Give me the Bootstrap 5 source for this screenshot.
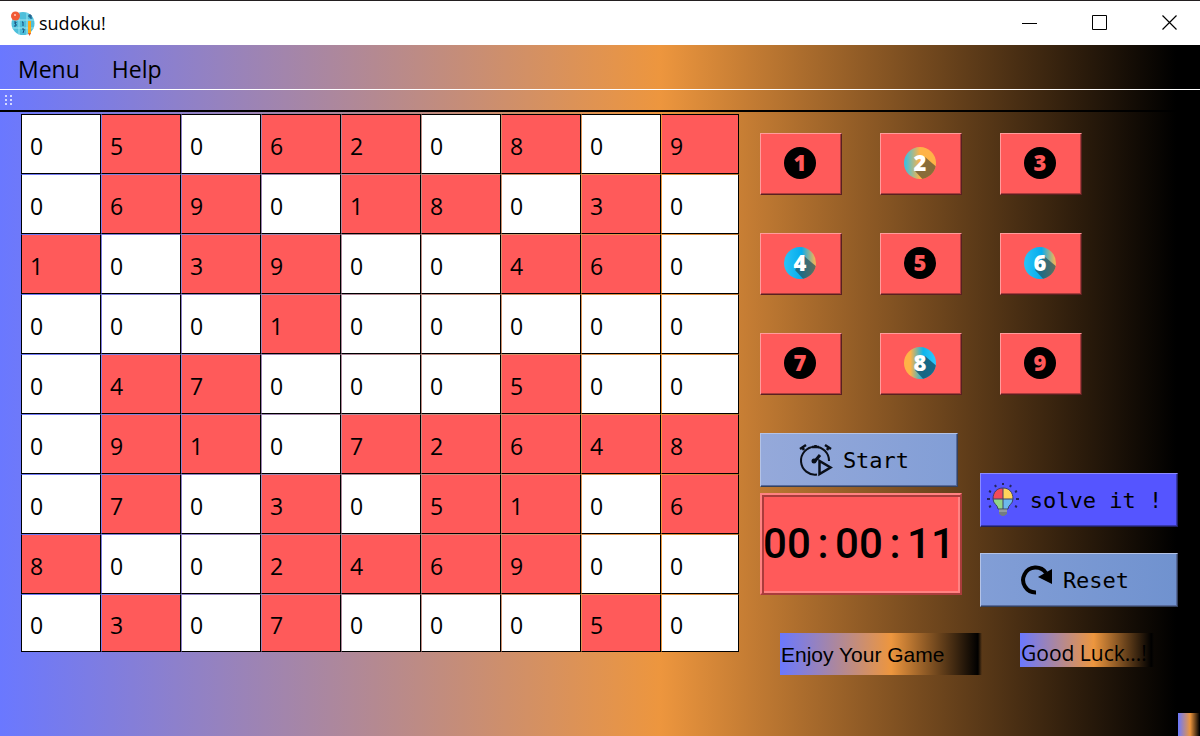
<!DOCTYPE html>
<html lang="en">
<head>
<meta charset="utf-8">
<meta name="viewport" content="width=device-width, initial-scale=1">
<title>sudoku!</title>
<link href="https://cdn.jsdelivr.net/npm/bootstrap@5.3.0/dist/css/bootstrap.min.css" rel="stylesheet">
<style>
:root{--glow:linear-gradient(90deg,#6a78ff 0%,#ed963e 55%,#000 98%,transparent 100%);--key:#ff5a5a}
body{font-family:"Open Sans","Noto Sans",sans-serif;color:#000;background:#000}
.app-window{background:var(--glow)}
.title-bar{height:45px;background:#fff;border-top:1px solid #231f20;font-size:18px;padding-left:10px}
.title-bar button{width:70px;height:44px;padding:0 0 4px 10px}
.menu-row{height:45px;border-bottom:1px solid #fff;padding:4px 0 0 18px;gap:32px;font-size:23px}
.menu-row a{color:#000;text-decoration:none}
.tool-row{height:22px;border-bottom:2px solid #000;padding-left:5px}
.play-area{display:grid;grid-template-columns:minmax(0,1fr) 440px;column-gap:21px;padding-left:21px;align-items:start}
.board{table-layout:fixed;border-collapse:separate;border-spacing:0;width:100%;margin-top:2px;font-size:23px;line-height:30px}
.board td{height:60px;padding:4px 8px 0;background:#fff;background-clip:padding-box;border:1px solid transparent;border-right-color:#000;border-bottom-color:#000}
.board td:first-child{border-left-color:#000}
.board tr:first-child td{border-top-color:#000}
.board tr:last-child td{height:58px}
.board td.given{background-color:var(--key)}
.last-col{width:78px}
.raised{border:1px solid;border-radius:0;padding:0;color:#000;border-color:#ff9c9c #5a2020 #5a2020 #ff9c9c}
.key-pad{display:grid;grid-template-columns:repeat(3,82px);gap:38px;padding-top:21px}
.num-key{height:62px;padding:0 2px 2px 0;background:var(--key);box-shadow:inset -1px -1px #aa3c3c}
.num-key text{font:800 22px "Open Sans",sans-serif;text-anchor:middle}
.controls{display:grid;grid-template-columns:202px 198px;column-gap:18px;margin-top:38px}
.side-keys{gap:26px;padding-top:40px}
.wide-key{width:198px;height:54px;gap:10px;padding-right:10px;font:22px "DejaVu Sans Mono",monospace;background:linear-gradient(90deg,#95a9da,#829ed6);border-color:#b4c3e6 #34415c #34415c #b4c3e6;box-shadow:inset -1px -1px #57699a}
.reset-key{background:linear-gradient(90deg,#829ed6,#7092cf)}
.solve-key{background:#5555ff;border-color:#8c8cff #202060 #202060 #8c8cff;box-shadow:inset -1px -1px #3838aa}
.lcd{height:102px;margin-top:6px;background:var(--key);border:2px solid;border-color:#ff8282 #aa3c3c #aa3c3c #ff8282;box-shadow:inset 2px 2px #aa3c3c,inset -2px -2px #ff8282;font:500 42px/48px Roboto,sans-serif;padding-left:1px}
.lcd span{width:24px;text-align:center}
.wishes{margin:26px 0 0 20px;gap:38px}
.wish{background:var(--glow);white-space:nowrap;padding-left:1px}
.wish-long{width:202px;height:42px;font:21px/44px "Liberation Sans",sans-serif}
.wish-short{width:134px;height:34px;font-size:21px;line-height:40px}
.grip{width:22px;height:23px;background:var(--glow)}
</style>
</head>
<body>
<div class="app-window d-flex flex-column min-vh-100">
<header class="title-bar d-flex align-items-center">
<svg width="25" height="25" viewBox="0 0 25 25" aria-hidden="true"><circle cx="13" cy="12.500" r="11.500" fill="#4dbfdb"/><path d="M9 2v22M17 2v22M2 9h22M2 17h22" stroke="#9be3ef" stroke-width="1"/><circle cx="5.500" cy="5" r="4.500" fill="#f15a35"/><path d="M4 3h2v2H4z" fill="#ffb09c"/><path d="M4 11h2v1H5v1h1v2H4M12 11h1v4M19 4h2v2h-2zM21 6v2M12 18h2v1l-1 3" fill="none" stroke="#174b7a"/><path d="M18 10h3v12l-1.500 2L18 22z" fill="#fba919"/><path d="M18 22h3l-1.500 3z" fill="#e4572e"/></svg>
<span class="ms-1 me-auto">sudoku!</span>
<button class="btn border-0" aria-label="Minimize"><svg width="16" height="16"><path d="M0 8.500h15" stroke="#000"/></svg></button>
<button class="btn border-0" aria-label="Maximize"><svg width="16" height="16"><path d="M.5.5h14v14H.5z" fill="none" stroke="#000"/></svg></button>
<button class="btn border-0" aria-label="Close"><svg width="16" height="16"><path d="M.5.5l14 14M14.500.5l-14 14" stroke="#000" stroke-width="1.200"/></svg></button>
</header>
<nav class="menu-row d-flex align-items-center"><a href="#">Menu</a><a href="#">Help</a></nav>
<div class="tool-row d-flex align-items-center"><svg width="8" height="11" aria-hidden="true"><path d="M0 0h2v2H0zM5 0h2v2H5zM0 4h2v2H0zM5 4h2v2H5zM0 8h2v2H0zM5 8h2v2H5z" fill="#d4d8ff"/></svg></div>
<main class="play-area">
<table class="board">
<colgroup><col span="8"><col class="last-col"></colgroup>
<tbody>
<tr><td>0</td><td class="given">5</td><td>0</td><td class="given">6</td><td class="given">2</td><td>0</td><td class="given">8</td><td>0</td><td class="given">9</td></tr>
<tr><td>0</td><td class="given">6</td><td class="given">9</td><td>0</td><td class="given">1</td><td class="given">8</td><td>0</td><td class="given">3</td><td>0</td></tr>
<tr><td class="given">1</td><td>0</td><td class="given">3</td><td class="given">9</td><td>0</td><td>0</td><td class="given">4</td><td class="given">6</td><td>0</td></tr>
<tr><td>0</td><td>0</td><td>0</td><td class="given">1</td><td>0</td><td>0</td><td>0</td><td>0</td><td>0</td></tr>
<tr><td>0</td><td class="given">4</td><td class="given">7</td><td>0</td><td>0</td><td>0</td><td class="given">5</td><td>0</td><td>0</td></tr>
<tr><td>0</td><td class="given">9</td><td class="given">1</td><td>0</td><td class="given">7</td><td class="given">2</td><td class="given">6</td><td class="given">4</td><td class="given">8</td></tr>
<tr><td>0</td><td class="given">7</td><td>0</td><td class="given">3</td><td>0</td><td class="given">5</td><td class="given">1</td><td>0</td><td class="given">6</td></tr>
<tr><td class="given">8</td><td>0</td><td>0</td><td class="given">2</td><td class="given">4</td><td class="given">6</td><td class="given">9</td><td>0</td><td>0</td></tr>
<tr><td>0</td><td class="given">3</td><td>0</td><td class="given">7</td><td>0</td><td>0</td><td>0</td><td class="given">5</td><td>0</td></tr>
</tbody>
</table>
<section>
<svg width="0" height="0" class="position-absolute" aria-hidden="true"><defs>
<linearGradient id="blueOrange"><stop offset=".05" stop-color="#45c0da"/><stop offset=".5" stop-color="#ffb347"/></linearGradient>
<linearGradient id="blueEdge"><stop offset="0" stop-color="#29c3f5"/><stop offset=".55" stop-color="#06adee"/><stop offset=".95" stop-color="#e9b35c"/></linearGradient>
<linearGradient id="orangeBlue"><stop offset=".2" stop-color="#ffb347"/><stop offset=".6" stop-color="#0db4ea"/><stop offset="1" stop-color="#32c8ff"/></linearGradient>
<clipPath id="disc"><circle cx="16" cy="16" r="16"/></clipPath>
</defs></svg>
<div class="key-pad">
<button class="raised num-key"><svg width="32" height="32"><circle cx="16" cy="16" r="16"/><text x="16" y="24" fill="#ff5a5a">1</text></svg></button>
<button class="raised num-key"><svg width="32" height="32"><g clip-path="url(#disc)"><path d="M0 0h32v32H0z" fill="url(#blueOrange)"/><path d="M21 10l14 12v14H22L11 24z" fill="#6b5a36" opacity=".8"/></g><text x="16" y="24" fill="#fff">2</text></svg></button>
<button class="raised num-key"><svg width="32" height="32"><circle cx="16" cy="16" r="16"/><text x="16" y="24" fill="#ff5a5a">3</text></svg></button>
<button class="raised num-key"><svg width="32" height="32"><g clip-path="url(#disc)"><path d="M0 0h32v32H0z" fill="url(#blueEdge)"/><path d="M20 9l14 12v14H22L11 23z" fill="#2b5660" opacity=".75"/></g><text x="16" y="24" fill="#fff">4</text></svg></button>
<button class="raised num-key"><svg width="32" height="32"><circle cx="16" cy="16" r="16"/><text x="16" y="24" fill="#ff5a5a">5</text></svg></button>
<button class="raised num-key"><svg width="32" height="32"><g clip-path="url(#disc)"><path d="M0 0h32v32H0z" fill="url(#blueEdge)"/><path d="M20 9l14 12v14H22L11 23z" fill="#2b5660" opacity=".75"/></g><text x="16" y="24" fill="#fff">6</text></svg></button>
<button class="raised num-key"><svg width="32" height="32"><circle cx="16" cy="16" r="16"/><text x="16" y="24" fill="#ff5a5a">7</text></svg></button>
<button class="raised num-key"><svg width="32" height="32"><g clip-path="url(#disc)"><path d="M0 0h32v32H0z" fill="url(#orangeBlue)"/><path d="M21 9l14 12v14H22L11 23z" fill="#17536b" opacity=".8"/></g><text x="16" y="24" fill="#fff">8</text></svg></button>
<button class="raised num-key"><svg width="32" height="32"><circle cx="16" cy="16" r="16"/><text x="16" y="24" fill="#ff5a5a">9</text></svg></button>
</div>
<div class="controls">
<div>
<button class="raised wide-key d-flex align-items-center justify-content-center"><svg width="34" height="34" viewBox="0 0 34 34" fill="none" stroke="#0a0f18" stroke-width="2"><path d="M18 31.500A14 14 0 1 1 30 18"/><path d="M1 6l6-4M32 6l-6-4M5 7L3 4M28 7l2-3M13 4h7M16.500 2v3" stroke-width="2.500"/><path d="M21 12l-5 6" stroke-width="3"/><circle cx="15" cy="18" r="2.500" fill="#0a0f18" stroke="none"/><path d="M20.500 18v13l11-6.500z" stroke-width="2.500"/></svg>Start</button>
<div class="lcd d-flex align-items-center" role="timer"><span>0</span><span>0</span><span>:</span><span>0</span><span>0</span><span>:</span><span>1</span><span>1</span></div>
</div>
<div class="side-keys d-flex flex-column">
<button class="raised wide-key solve-key d-flex align-items-center justify-content-center"><svg width="34" height="34" viewBox="0 0 34 34"><path d="M17 5v11H7A10 10 0 0 1 17 5z" fill="#f24b5b"/><path d="M17 5a10 10 0 0 1 10 11H17z" fill="#ffd35c"/><path d="M7 16h10v10h-5c0-4-5-5-5-10z" fill="#91d487"/><path d="M17 16h10c0 5-5 6-5 10h-5z" fill="#6bb9ed"/><path d="M7 16h20M17 5v21M7 16C7 9 11 5 17 5s10 4 10 11c0 5-5 6-5 10H12c0-4-5-5-5-10z" fill="none" stroke="#3c4067" stroke-width="1"/><path d="M13 26h8v5l-3 2h-2l-3-2z" fill="#737d80"/><path d="M13 28h8" stroke="#b4babb"/><path d="M17 0v2M9 2l1 2M25 2l-1 2M3 8l2 1M31 8l-2 1M1 16h3M30 16h3M3 24l2-1M31 24l-2-1" stroke="#24245c" stroke-width="2"/></svg>solve it !</button>
<button class="raised wide-key reset-key d-flex align-items-center justify-content-center"><svg width="34" height="32" viewBox="0 0 34 32"><path d="M17 28.500A12.500 12.500 0 1 1 27 9" fill="none" stroke="#000" stroke-width="4"/><path d="M33 5v15L19 13z"/></svg>Reset</button>
</div>
</div>
<div class="wishes d-flex"><div class="wish wish-long">Enjoy Your Game</div><div class="wish wish-short">Good Luck...!</div></div>
</section>
</main>
<div class="grip mt-auto align-self-end"></div>
</div>
<script src="https://cdn.jsdelivr.net/npm/bootstrap@5.3.0/dist/js/bootstrap.bundle.min.js"></script>
</body>
</html>
